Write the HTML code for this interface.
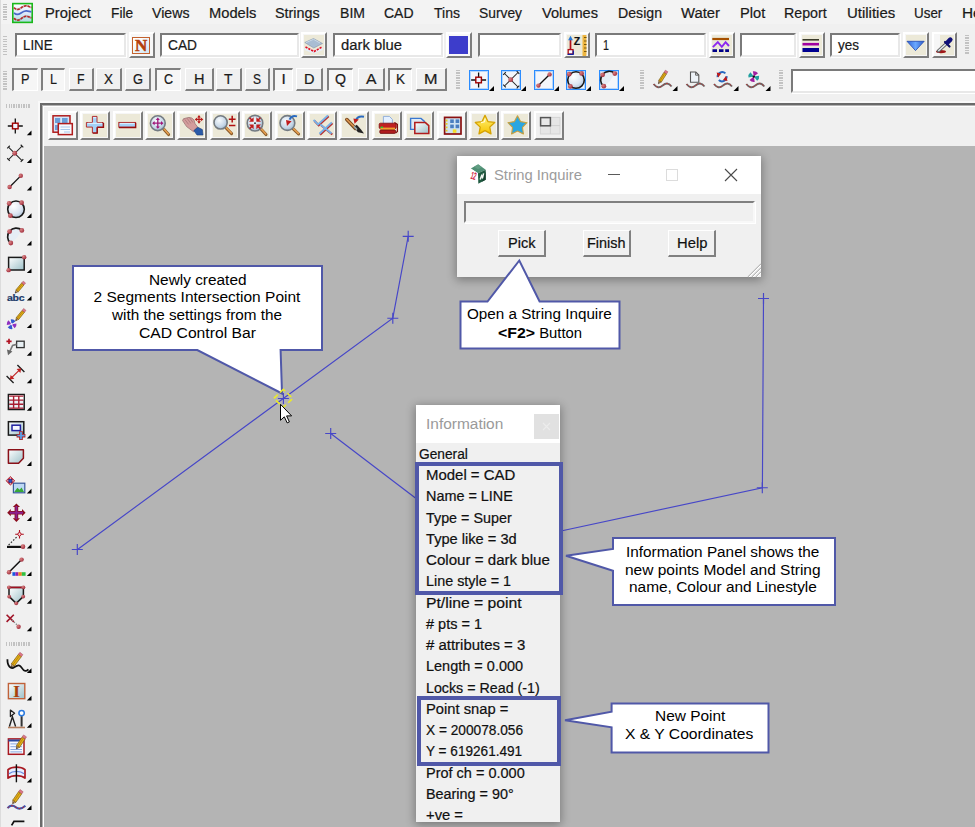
<!DOCTYPE html>
<html lang="en"><head><meta charset="utf-8"><title>12d Model - String Inquire</title>
<style>
html,body{margin:0;padding:0;background:#f0f0f0;}
body{width:975px;height:827px;overflow:hidden;font-family:"Liberation Sans",sans-serif;}
#app{position:relative;width:975px;height:827px;overflow:hidden;background:#f0f0f0;}
#app *{box-sizing:border-box;}
.a{position:absolute;}
.t{position:absolute;white-space:pre;transform-origin:0 0;-webkit-text-stroke:.22px currentColor;}
.c{-webkit-text-stroke:0;}
.inp{position:absolute;background:#fff;border:2px solid;border-color:#7a7a7a #e8e8e8 #e8e8e8 #7a7a7a;box-shadow:1px 1px 0 #fff;}
.btn{position:absolute;background:#ece9d8;border-style:solid;border-width:2px;border-color:#fff #7d7d7d #7d7d7d #fff;box-shadow:inset 1px 1px 0 #f6f6f6,inset -1px -1px 0 #f6f6f6;}
.lb{position:absolute;background:#f0f0f0;border-style:solid;border-width:1px 2px 2px 1px;border-color:#fff #808080 #808080 #fff;}
.lbs{position:absolute;background:#f6f6f6;border-style:solid;border-width:2px 1px 1px 2px;border-color:#808080 #fff #fff #808080;}
.grip{position:absolute;width:4px;background:repeating-linear-gradient(to bottom,#c2c2c2 0,#c2c2c2 1.1px,transparent 1.1px,transparent 2.5px);}
.griph{position:absolute;height:4px;background:repeating-linear-gradient(to right,#c2c2c2 0,#c2c2c2 1.1px,transparent 1.1px,transparent 2.5px);}
.tri{position:absolute;width:0;height:0;border-left:4px solid transparent;border-bottom:4px solid #000;}
svg{position:absolute;overflow:visible;}

</style></head>
<body>
<div id="app">
<div class="a" style="left:0;top:0;width:975px;height:24px;background:#f3f3f3"></div>
<div class="a" style="left:0;top:0;width:1px;height:827px;background:#dcdcdc"></div>
<div class="grip" style="left:3px;top:4px;height:17px"></div>
<span class="t" style="left:45.4px;top:4.9px;font-size:15.5px;line-height:15.5px;color:#1a1a1a;transform:scaleX(0.9513);">Project</span>
<span class="t" style="left:110.5px;top:4.9px;font-size:15.5px;line-height:15.5px;color:#1a1a1a;transform:scaleX(0.8846);">File</span>
<span class="t" style="left:151.5px;top:4.9px;font-size:15.5px;line-height:15.5px;color:#1a1a1a;transform:scaleX(0.9129);">Views</span>
<span class="t" style="left:208.6px;top:4.9px;font-size:15.5px;line-height:15.5px;color:#1a1a1a;transform:scaleX(0.9486);">Models</span>
<span class="t" style="left:275.3px;top:4.9px;font-size:15.5px;line-height:15.5px;color:#1a1a1a;transform:scaleX(0.9264);">Strings</span>
<span class="t" style="left:339.8px;top:4.9px;font-size:15.5px;line-height:15.5px;color:#1a1a1a;transform:scaleX(0.9070);">BIM</span>
<span class="t" style="left:384.0px;top:4.9px;font-size:15.5px;line-height:15.5px;color:#1a1a1a;transform:scaleX(0.9042);">CAD</span>
<span class="t" style="left:434.0px;top:4.9px;font-size:15.5px;line-height:15.5px;color:#1a1a1a;transform:scaleX(0.9053);">Tins</span>
<span class="t" style="left:479.0px;top:4.9px;font-size:15.5px;line-height:15.5px;color:#1a1a1a;transform:scaleX(0.8912);">Survey</span>
<span class="t" style="left:541.5px;top:4.9px;font-size:15.5px;line-height:15.5px;color:#1a1a1a;transform:scaleX(0.9419);">Volumes</span>
<span class="t" style="left:618.0px;top:4.9px;font-size:15.5px;line-height:15.5px;color:#1a1a1a;transform:scaleX(0.9119);">Design</span>
<span class="t" style="left:681.0px;top:4.9px;font-size:15.5px;line-height:15.5px;color:#1a1a1a;transform:scaleX(0.9567);">Water</span>
<span class="t" style="left:739.8px;top:4.9px;font-size:15.5px;line-height:15.5px;color:#1a1a1a;transform:scaleX(0.9432);">Plot</span>
<span class="t" style="left:784.3px;top:4.9px;font-size:15.5px;line-height:15.5px;color:#1a1a1a;transform:scaleX(0.9177);">Report</span>
<span class="t" style="left:846.8px;top:4.9px;font-size:15.5px;line-height:15.5px;color:#1a1a1a;transform:scaleX(0.9649);">Utilities</span>
<span class="t" style="left:914.2px;top:4.9px;font-size:15.5px;line-height:15.5px;color:#1a1a1a;transform:scaleX(0.8645);">User</span>
<span class="t" style="left:961.6px;top:4.9px;font-size:15.5px;line-height:15.5px;color:#1a1a1a;transform:scaleX(0.9878);">Help</span>
<div class="grip" style="left:3px;top:35.5px;height:19px"></div>
<div class="inp" style="left:15px;top:33px;width:111px;height:24px"></div>
<span class="t" style="left:23.0px;top:37.3px;font-size:15.5px;line-height:15.5px;color:#1a1a1a;transform:scaleX(0.8558);">LINE</span>
<div class="btn" style="left:129px;top:32px;width:26px;height:26px"></div>
<div class="inp" style="left:160px;top:33px;width:139px;height:24px"></div>
<span class="t" style="left:168.0px;top:37.3px;font-size:15.5px;line-height:15.5px;color:#1a1a1a;transform:scaleX(0.8859);">CAD</span>
<div class="btn" style="left:301px;top:32px;width:26px;height:26px"></div>
<div class="inp" style="left:333px;top:33px;width:110px;height:24px"></div>
<span class="t" style="left:340.5px;top:37.3px;font-size:15.5px;line-height:15.5px;color:#1a1a1a;transform:scaleX(0.9566);">dark blue</span>
<div class="btn" style="left:446px;top:32px;width:26px;height:26px"></div>
<div class="a" style="left:449px;top:36px;width:19px;height:18px;background:#3d3dcb"></div>
<div class="inp" style="left:478px;top:33px;width:83px;height:24px"></div>
<div class="btn" style="left:564px;top:32px;width:26px;height:26px"></div>
<div class="inp" style="left:595px;top:33px;width:111px;height:24px"></div>
<span class="t" style="left:603.0px;top:37.3px;font-size:15.5px;line-height:15.5px;color:#1a1a1a;transform:scaleX(0.6957);">1</span>
<div class="btn" style="left:709px;top:32px;width:26px;height:26px"></div>
<div class="inp" style="left:740px;top:33px;width:56px;height:24px"></div>
<div class="btn" style="left:799px;top:32px;width:26px;height:26px"></div>
<div class="inp" style="left:830px;top:33px;width:70px;height:24px"></div>
<span class="t" style="left:838.0px;top:37.3px;font-size:15.5px;line-height:15.5px;color:#1a1a1a;transform:scaleX(0.8705);">yes</span>
<div class="btn" style="left:903px;top:32px;width:26px;height:26px"></div>
<div class="btn" style="left:932px;top:32px;width:25px;height:26px"></div>
<div class="grip" style="left:965px;top:35px;height:20px"></div>
<div class="grip" style="left:2.5px;top:70.5px;height:19px"></div>
<div class="lbs" style="left:12px;top:68px;width:26px;height:23px"></div>
<span class="t" style="left:21.2px;top:71.1px;font-size:15.5px;line-height:15.5px;color:#1a1a1a;transform:scaleX(0.8218);">P</span>
<div class="lbs" style="left:41px;top:68px;width:24px;height:23px"></div>
<span class="t" style="left:50.0px;top:71.1px;font-size:15.5px;line-height:15.5px;color:#1a1a1a;transform:scaleX(0.8116);">L</span>
<div class="lb" style="left:69px;top:68px;width:25px;height:23px"></div>
<span class="t" style="left:77.2px;top:71.1px;font-size:15.5px;line-height:15.5px;color:#1a1a1a;transform:scaleX(0.7921);">F</span>
<div class="lb" style="left:96px;top:68px;width:26px;height:23px"></div>
<span class="t" style="left:104.0px;top:71.1px;font-size:15.5px;line-height:15.5px;color:#1a1a1a;transform:scaleX(0.8701);">X</span>
<div class="lb" style="left:125px;top:68px;width:26px;height:23px"></div>
<span class="t" style="left:132.5px;top:71.1px;font-size:15.5px;line-height:15.5px;color:#1a1a1a;transform:scaleX(0.8290);">G</span>
<div class="lbs" style="left:155px;top:68px;width:26px;height:23px"></div>
<span class="t" style="left:164.0px;top:71.1px;font-size:15.5px;line-height:15.5px;color:#1a1a1a;transform:scaleX(0.8033);">C</span>
<div class="lb" style="left:185px;top:68px;width:29px;height:23px"></div>
<span class="t" style="left:193.8px;top:71.1px;font-size:15.5px;line-height:15.5px;color:#1a1a1a;transform:scaleX(0.9372);">H</span>
<div class="lb" style="left:216px;top:68px;width:26px;height:23px"></div>
<span class="t" style="left:224.2px;top:71.1px;font-size:15.5px;line-height:15.5px;color:#1a1a1a;transform:scaleX(0.8977);">T</span>
<div class="lb" style="left:245px;top:68px;width:25px;height:23px"></div>
<span class="t" style="left:253.0px;top:71.1px;font-size:15.5px;line-height:15.5px;color:#1a1a1a;transform:scaleX(0.7734);">S</span>
<div class="lbs" style="left:273px;top:68px;width:20px;height:23px"></div>
<span class="t" style="left:281.4px;top:71.1px;font-size:15.5px;line-height:15.5px;color:#1a1a1a;">I</span>
<div class="lb" style="left:296px;top:68px;width:27px;height:23px"></div>
<span class="t" style="left:303.8px;top:71.1px;font-size:15.5px;line-height:15.5px;color:#1a1a1a;transform:scaleX(0.9372);">D</span>
<div class="lbs" style="left:327px;top:68px;width:26px;height:23px"></div>
<span class="t" style="left:335.0px;top:71.1px;font-size:15.5px;line-height:15.5px;color:#1a1a1a;transform:scaleX(0.9119);">Q</span>
<div class="lb" style="left:358px;top:68px;width:27px;height:23px"></div>
<span class="t" style="left:365.8px;top:71.1px;font-size:15.5px;line-height:15.5px;color:#1a1a1a;transform:scaleX(1.0151);">A</span>
<div class="lbs" style="left:388px;top:68px;width:24px;height:23px"></div>
<span class="t" style="left:396.0px;top:71.1px;font-size:15.5px;line-height:15.5px;color:#1a1a1a;transform:scaleX(0.8701);">K</span>
<div class="lb" style="left:416px;top:68px;width:31px;height:23px"></div>
<span class="t" style="left:424.2px;top:71.1px;font-size:15.5px;line-height:15.5px;color:#1a1a1a;transform:scaleX(1.0447);">M</span>
<div class="grip" style="left:456px;top:70px;height:20px"></div>
<div class="grip" style="left:640px;top:70px;height:20px"></div>
<div class="grip" style="left:779px;top:70px;height:20px"></div>
<div class="inp" style="left:791px;top:69px;width:190px;height:24px"></div>
<svg style="left:0;top:0" width="0" height="0"><defs><linearGradient id="gApp" x1="0" y1="0" x2="0" y2="1"><stop offset="0" stop-color="#ffffff"/><stop offset=".5" stop-color="#dfe9fb"/><stop offset="1" stop-color="#a8dcdc"/></linearGradient><radialGradient id="gBall" cx=".35" cy=".3" r=".8"><stop offset="0" stop-color="#ffffff"/><stop offset=".6" stop-color="#dde6f2"/><stop offset="1" stop-color="#a9bfd6"/></radialGradient><radialGradient id="gDot" cx=".35" cy=".35" r=".7"><stop offset="0" stop-color="#d88484"/><stop offset="1" stop-color="#a02a3a"/></radialGradient><linearGradient id="gRect" x1="0" y1="0" x2="1" y2="1"><stop offset="0" stop-color="#ffffff"/><stop offset="1" stop-color="#9cc0c8"/></linearGradient><linearGradient id="gTri" x1="0" y1="0" x2="1" y2="0"><stop offset="0" stop-color="#2f62d8"/><stop offset=".5" stop-color="#6aa8ff"/><stop offset="1" stop-color="#2a58c8"/></linearGradient><radialGradient id="gLens" cx=".4" cy=".35" r=".75"><stop offset="0" stop-color="#f6fafd"/><stop offset=".6" stop-color="#c8d8e8"/><stop offset="1" stop-color="#98b4cc"/></radialGradient><linearGradient id="gStarY" x1="0" y1="0" x2="0" y2="1"><stop offset="0" stop-color="#fff27a"/><stop offset="1" stop-color="#f6c400"/></linearGradient></defs></svg>
<svg style="left:12px;top:3px" width="21" height="20" viewBox="12 3 21 20" ><rect x="12.8" y="3.6" width="19.4" height="18.8" fill="url(#gApp)" stroke="#1ab81a" stroke-width="1.6"/><path d="M14 7.6C15.6 9.6 18.2 10 20.4 8.4S24.6 5.4 26.6 5.8S29.6 7 31.4 7.4" fill="none" stroke="#7a3030" stroke-width="2" opacity=".35"/><path d="M14 7.6C15.6 9.6 18.2 10 20.4 8.4S24.6 5.4 26.6 5.8S29.6 7 31.4 7.4" fill="none" stroke="#b82424" stroke-width="1.5" stroke-dasharray="2.6 1.1"/><path d="M14 12.8C15.8 14.6 18.4 14.8 20.6 13.2S24.4 10.6 26.4 10.8S29.6 11.6 31.4 11.8" fill="none" stroke="#4a68c8" stroke-width="1.7"/><path d="M14 18.2C15.8 20.4 18.6 20.8 20.8 19S24.6 15.8 26.6 16.2S29.6 17.4 31.4 17.8" fill="none" stroke="#7a3030" stroke-width="2" opacity=".35"/><path d="M14 18.2C15.8 20.4 18.6 20.8 20.8 19S24.6 15.8 26.6 16.2S29.6 17.4 31.4 17.8" fill="none" stroke="#b82424" stroke-width="1.5" stroke-dasharray="2.6 1.1"/></svg>
<div class="a" style="left:131px;top:34px;width:22px;height:22px;background:#f7f7f7"></div>
<div class="a" style="left:132px;top:37px;width:18px;height:17px;border:1px solid #c4622e;background:linear-gradient(135deg,#fff 20%,#cfe6f4 100%)"></div>
<span class="t" style="left:134.8px;top:37.7px;font-family:'Liberation Serif',serif;font-weight:700;font-size:16px;line-height:16px;color:#b5400c;-webkit-text-stroke:.5px #b5400c;transform:scaleX(1.06)">N</span>
<svg style="left:303px;top:35px" width="22" height="20" viewBox="303 35 22 20" ><path d="M305 48.5L314 52L322.5 48.5" fill="none" stroke="#e6eef8" stroke-width="3"/><path d="M305.5 47L314 51.5L322 47" fill="none" stroke="#e01020" stroke-width="1.6" stroke-dasharray="2.2 1"/><path d="M304.8 42.5L313.5 38.5L322.5 43.5L313.8 48Z" fill="#a9bdd3" stroke="#8194aa" stroke-width=".6"/><path d="M306 42.6L313.5 39.3L320 43" fill="none" stroke="#c9d8e8" stroke-width="1"/></svg>
<div class="a" style="left:448px;top:34px;width:22px;height:22px;background:#f8f8f8"></div><div class="a" style="left:449px;top:36px;width:19px;height:18px;background:#3d3dcb"></div>
<svg style="left:566px;top:34px" width="22" height="23" viewBox="566 34 22 23" ><rect x="582.5" y="35" width="3.8" height="21" fill="#eeb640"/><path d="M584 37.5h2.6M584 41h2.6M584 44.5h2.6M584 48h2.6M584 51.5h2.6" stroke="#7a5a10" stroke-width="1"/><path d="M570.5 39V50" stroke="#b01018" stroke-width="1.7"/><path d="M570.5 35.8L572.9 40.2H568.1Z" fill="#2878d8"/><rect x="568.2" y="49.6" width="4.8" height="4.4" fill="#f4f8ff" stroke="#b01018" stroke-width="1.3"/><path d="M567.6 54.3H573.6M573.3 54.3V50.5" stroke="#1020a0" stroke-width="1.3" fill="none"/></svg>
<span class="t" style="left:573.8px;top:35.6px;font-weight:700;font-size:10.5px;line-height:10px;color:#111">Z</span>
<svg style="left:711px;top:35px" width="21" height="20" viewBox="711 35 21 20" ><path d="M712.3 39H729" stroke="#a65000" stroke-width="2.2"/><path d="M712.8 47.2L717.8 42.2L721.8 46.8L725.6 42.2L729 46" fill="none" stroke="#8c28f0" stroke-width="1.9"/><path d="M712.5 50.6H717M719 50.6H723.5M725.2 50.6H729" stroke="#000088" stroke-width="2.6"/></svg>
<svg style="left:801px;top:35px" width="21" height="20" viewBox="801 35 21 20" ><path d="M802.5 39.8H819" stroke="#3a3a2a" stroke-width="1.6"/><path d="M802.5 44.2H819" stroke="#a000a0" stroke-width="2.6"/><path d="M802.5 50H819" stroke="#000090" stroke-width="4"/></svg>
<svg style="left:905px;top:38px" width="22" height="15" viewBox="905 38 22 15" ><path d="M907 41.3H924.2L915.5 50.6Z" fill="url(#gTri)" stroke="#2048b0" stroke-width=".8"/></svg>
<div class="a" style="left:934px;top:34px;width:6px;height:22px;background:#f6f6f6"></div>
<svg style="left:934px;top:35px" width="22" height="21" viewBox="934 35 22 21" ><ellipse cx="941" cy="51.6" rx="5" ry="1.7" fill="#a01818"/><path d="M946.5 43.5L938.3 51" stroke="#666" stroke-width="3.2" stroke-linecap="round"/><path d="M946 44L938.8 50.5" stroke="#e8eef4" stroke-width="1.4" stroke-linecap="round"/><path d="M945 42L949.5 46.5" stroke="#101060" stroke-width="2.2" stroke-linecap="round"/><path d="M947.5 42.5L950.3 39.6" stroke="#101078" stroke-width="4.6" stroke-linecap="round"/></svg>
<div class="a" style="left:469px;top:70px;width:20px;height:20px;border:1px solid #2a8cff;box-shadow:inset 0 0 0 1px rgba(42,140,255,.3);background:#f3f6fa"></div>
<svg style="left:467px;top:66px" width="30" height="28" viewBox="467 66 30 28" ><path d="M471.1 80H486.1M478.6 72.5V87.5" stroke="#111" stroke-width="1.3"/><rect x="475.8" y="77.2" width="5.6" height="5.6" fill="#eef4ff" stroke="#a00000" stroke-width="1.4"/><path d="M494 91H489L494 86Z" fill="#000"/></svg>
<div class="a" style="left:501px;top:70px;width:20px;height:20px;border:1px solid #2a8cff;box-shadow:inset 0 0 0 1px rgba(42,140,255,.3);background:#f3f6fa"></div>
<svg style="left:499px;top:66px" width="30" height="28" viewBox="499 66 30 28" ><path d="M504.5 73.5L518 87M518 72.5L504.5 86" stroke="#2a2a2a" stroke-width="1.05"/><path d="M503.2 74.8l2.6 -2.6M516.7 88.3l2.6 -2.6M516.7 71.2l2.6 2.6M503.2 84.7l2.6 2.6" stroke="#222" stroke-width="1.1"/><circle cx="510.7" cy="79.7" r="2.4" fill="url(#gDot)"/><path d="M526 91H521L526 86Z" fill="#000"/></svg>
<div class="a" style="left:534px;top:70px;width:20px;height:20px;border:1px solid #2a8cff;box-shadow:inset 0 0 0 1px rgba(42,140,255,.3);background:#f3f6fa"></div>
<svg style="left:532px;top:66px" width="30" height="28" viewBox="532 66 30 28" ><path d="M538.7 85.3L549.3 74.7" stroke="#111" stroke-width="1.3"/><circle cx="538.4" cy="85.6" r="2.2" fill="url(#gDot)"/><circle cx="549.6" cy="74.4" r="2.2" fill="url(#gDot)"/><path d="M559 91H554L559 86Z" fill="#000"/></svg>
<div class="a" style="left:566px;top:70px;width:20px;height:20px;border:1px solid #2a8cff;box-shadow:inset 0 0 0 1px rgba(42,140,255,.3);background:#f3f6fa"></div>
<svg style="left:564px;top:66px" width="30" height="28" viewBox="564 66 30 28" ><circle cx="576" cy="80" r="8.3" fill="url(#gBall)" stroke="#1a1a1a" stroke-width="1.6"/><circle cx="569.2" cy="74.2" r="2.4" fill="url(#gDot)"/><circle cx="581.6" cy="73.4" r="2.4" fill="url(#gDot)"/><circle cx="570.4" cy="86.4" r="2.4" fill="url(#gDot)"/><path d="M591 91H586L591 86Z" fill="#000"/></svg>
<div class="a" style="left:599px;top:70px;width:20px;height:20px;border:1px solid #2a8cff;box-shadow:inset 0 0 0 1px rgba(42,140,255,.3);background:#f3f6fa"></div>
<svg style="left:597px;top:66px" width="30" height="28" viewBox="597 66 30 28" ><path d="M614.8 73.4A8.5 8.5 0 0 0 603.6 86.4L610 81Z" fill="#e6edf5"/><path d="M614.8 73.4A8.5 8.5 0 0 0 603.6 86.4" fill="none" stroke="#1a1a1a" stroke-width="1.6"/><circle cx="602.6" cy="74.8" r="2.4" fill="url(#gDot)"/><circle cx="614.8" cy="73.6" r="2.4" fill="url(#gDot)"/><circle cx="603.8" cy="86.2" r="2.4" fill="url(#gDot)"/><path d="M624 91H619L624 86Z" fill="#000"/></svg>
<svg style="left:650px;top:66px" width="30" height="28" viewBox="650 66 30 28" ><path d="M653.6 84.0C656.6 88.0 659.6 88.0 662.6 85.5S668.6 82.5 671.6 86.5" fill="none" stroke="#6a6a6a" stroke-width="1.9"/><path d="M653.6 84.0C656.6 88.0 659.6 88.0 662.6 85.5S668.6 82.5 671.6 86.5" fill="none" stroke="#c03030" stroke-width=".9" stroke-dasharray="2 1.6"/><path d="M658.40 83.80L661.28 82.08L658.76 80.46Z" fill="#c8a070" stroke="#5a4020" stroke-width=".5"/><path d="M661.28 82.08L666.57 73.83L664.04 72.21L658.76 80.46Z" fill="#e4b018" stroke="#7a5a10" stroke-width=".7"/><path d="M659.85 81.17L665.14 72.91" stroke="#b88408" stroke-width=".9"/><path d="M666.57 73.83L667.86 71.81L665.34 70.19L664.04 72.21Z" fill="#de7888" stroke="#a04858" stroke-width=".5"/><path d="M658.40 83.80L659.71 82.86L658.70 82.21Z" fill="#1a1a1a"/><path d="M677.5 91H672.5L677.5 86Z" fill="#000"/></svg>
<svg style="left:684px;top:66px" width="24" height="28" viewBox="684 66 24 28" ><path d="M686.5 84.0C689.5 88.0 692.5 88.0 695.5 85.5S701.5 82.5 704.5 86.5" fill="none" stroke="#6a6a6a" stroke-width="1.9"/><path d="M686.5 84.0C689.5 88.0 692.5 88.0 695.5 85.5S701.5 82.5 704.5 86.5" fill="none" stroke="#c03030" stroke-width=".9" stroke-dasharray="2 1.6"/><path d="M690.5 72H695.8L698.8 75V82.2H690.5Z" fill="#eef3f8" stroke="#555" stroke-width="1.1"/><path d="M695.6 72.2V75.2H698.6" fill="none" stroke="#555" stroke-width=".9"/></svg>
<svg style="left:712px;top:66px" width="30" height="28" viewBox="712 66 30 28" ><path d="M714 84.0C717 88.0 720 88.0 723 85.5S729 82.5 732 86.5" fill="none" stroke="#6a6a6a" stroke-width="1.9"/><path d="M714 84.0C717 88.0 720 88.0 723 85.5S729 82.5 732 86.5" fill="none" stroke="#c03030" stroke-width=".9" stroke-dasharray="2 1.6"/><path d="M717.6 77.2A4.6 4.6 0 0 1 725.4 73.4" fill="none" stroke="#2868c0" stroke-width="1.9"/><path d="M726.6 76.2A4.6 4.6 0 0 1 718.8 80" fill="none" stroke="#2868c0" stroke-width="1.9"/><path d="M716.6 72.4L721.2 73.4L718.2 77.4Z" fill="#c01818"/><path d="M727.6 81L723 80L726 76Z" fill="#c01818"/><path d="M738.5 91H733.5L738.5 86Z" fill="#000"/></svg>
<svg style="left:744px;top:66px" width="30" height="28" viewBox="744 66 30 28" ><path d="M746.3 84.0C749.3 88.0 752.3 88.0 755.3 85.5S761.3 82.5 764.3 86.5" fill="none" stroke="#6a6a6a" stroke-width="1.9"/><path d="M746.3 84.0C749.3 88.0 752.3 88.0 755.3 85.5S761.3 82.5 764.3 86.5" fill="none" stroke="#c03030" stroke-width=".9" stroke-dasharray="2 1.6"/><path d="M753.8 76.6L752.86 71.28A5.4 5.4 0 0 1 758.06 73.28Z" fill="#a020a0"/><path d="M753.8 76.6L759.12 75.66A5.4 5.4 0 0 1 757.12 80.86Z" fill="#20a0a0"/><path d="M753.8 76.6L754.74 81.92A5.4 5.4 0 0 1 749.54 79.92Z" fill="#a020a0"/><path d="M753.8 76.6L748.48 77.54A5.4 5.4 0 0 1 750.48 72.34Z" fill="#20a0a0"/><circle cx="753.8" cy="76.6" r="1.2" fill="#111"/><path d="M770.5 91H765.5L770.5 86Z" fill="#000"/></svg>
<div class="a" style="left:38px;top:101px;width:940px;height:730px;border-left:2px solid #f9f9f9;border-top:2px solid #f9f9f9"></div>
<div class="a" style="left:40px;top:103px;width:940px;height:730px;border:2px solid #6a6a6a;border-right:0;border-bottom:0;background:#f0f0f0"></div>
<div class="a" style="left:42px;top:105px;width:940px;height:730px;border-left:1px solid #b2b2b2;border-top:1px solid #b2b2b2;"></div>
<div class="a" style="left:43px;top:106px;width:940px;height:730px;border-left:1px solid #fff;border-top:1px solid #fff;"></div>
<div class="a" style="left:44px;top:146px;width:940px;height:700px;background:#b4b4b4"></div>
<div class="btn" style="left:48px;top:111px;width:30px;height:29px"></div>
<div class="btn" style="left:80px;top:111px;width:30px;height:29px"></div>
<div class="btn" style="left:113px;top:111px;width:30px;height:29px"></div>
<div class="btn" style="left:145px;top:111px;width:30px;height:29px"></div>
<div class="btn" style="left:177px;top:111px;width:30px;height:29px"></div>
<div class="btn" style="left:210px;top:111px;width:30px;height:29px"></div>
<div class="btn" style="left:242px;top:111px;width:30px;height:29px"></div>
<div class="btn" style="left:275px;top:111px;width:30px;height:29px"></div>
<div class="btn" style="left:307px;top:111px;width:30px;height:29px"></div>
<div class="btn" style="left:339px;top:111px;width:30px;height:29px"></div>
<div class="btn" style="left:372px;top:111px;width:30px;height:29px"></div>
<div class="btn" style="left:404px;top:111px;width:30px;height:29px"></div>
<div class="btn" style="left:437px;top:111px;width:30px;height:29px"></div>
<div class="btn" style="left:469px;top:111px;width:30px;height:29px"></div>
<div class="btn" style="left:501px;top:111px;width:30px;height:29px"></div>
<div class="btn" style="left:534px;top:111px;width:30px;height:29px"></div>
<div class="a" style="left:50px;top:113px;width:26px;height:25px;background:#f5f5f5"></div>
<div class="a" style="left:439px;top:113px;width:26px;height:25px;background:#f5f5f5"></div>
<div class="a" style="left:536px;top:113px;width:26px;height:25px;background:#f0f0f0"></div>
<svg style="left:44px;top:108px" width="530" height="34" viewBox="44 108 530 34" ><rect x="53" y="115.8" width="17" height="16.4" fill="#d4e6f8" stroke="#b01c1c" stroke-width="1.5"/><rect x="55" y="118" width="5.2" height="5" fill="#6a9ed8"/><rect x="62" y="118" width="5.6" height="5" fill="#6a9ed8"/><rect x="55" y="125" width="3" height="5" fill="#6a9ed8"/><rect x="58.3" y="123.6" width="14" height="11" fill="#f6faff" stroke="#b01c1c" stroke-width="1.5"/><path d="M60.5 127H70M60.5 129.5H70M64 132H70" stroke="#a8c8ec" stroke-width="1"/><path d="M92.4 116.4H97V122.5H103.2V127.1H97V132.9H92.4V127.1H86.4V122.5H92.4Z" fill="#a4d2f8" stroke="#b01c1c" stroke-width=".9"/><path d="M97.3 127.4V133.2H92.8M103.5 123V127.4H97.3" fill="none" stroke="#981010" stroke-width="1.3"/><path d="M93.2 117.6H96.2M87.6 123.4H102" stroke="#d8eeff" stroke-width="1.2"/><rect x="118.8" y="122.4" width="16.6" height="4.8" fill="#a4d2f8" stroke="#b01c1c" stroke-width=".9"/><path d="M119 127.5H135.7V122.8" fill="none" stroke="#981010" stroke-width="1.3"/><path d="M120 123.5H134.4" stroke="#d8eeff" stroke-width="1.1"/><path d="M163.63338048090523 129.03338048090524L168.6 134.6" stroke="#8a5a28" stroke-width="3" stroke-linecap="round"/><path d="M163.83338048090525 128.83338048090525L168.4 134.0" stroke="#e8a050" stroke-width="1.5" stroke-linecap="round"/><circle cx="157.8" cy="123.2" r="7.4" fill="url(#gLens)" stroke="#747b82" stroke-width="1.6"/><path d="M153.4 123.2H162.20000000000002M157.8 118.8V127.60000000000001" stroke="#a0187a" stroke-width="1.3"/><path d="M163.4 123.2L161.0 125.3L161.0 121.10000000000001Z" fill="#a0187a"/><path d="M152.20000000000002 123.2L154.60000000000002 121.10000000000001L154.60000000000002 125.3Z" fill="#a0187a"/><path d="M157.8 128.8L155.70000000000002 126.4L159.9 126.4Z" fill="#a0187a"/><path d="M157.8 117.60000000000001L159.9 120.0L155.70000000000002 120.0Z" fill="#a0187a"/><path d="M182.6 120.6L186.6 126.6L193.6 131.8L197.6 127L195 123.6L194 120L191.8 118L189 117.4L186.2 118L183.4 118.8Z" fill="#d49c9c" stroke="#946c6c" stroke-width=".7"/><path d="M184.8 119.4L188.6 124.4M187 118.2L190.8 123.4M189.6 117.8L193 122.6" stroke="#a87878" stroke-width=".8"/><path d="M193.8 130.6L197.8 127.2L202.4 129.6L203 135H197Z" fill="#2a5aa8" stroke="#1c3c78" stroke-width=".6"/><path d="M195.9 119.4H202.1M199 116.30000000000001V122.5" stroke="#b81818" stroke-width="1.2"/><path d="M203.3 119.4L200.9 121.2L200.9 117.60000000000001Z" fill="#b81818"/><path d="M194.7 119.4L197.1 117.60000000000001L197.1 121.2Z" fill="#b81818"/><path d="M199.0 123.7L197.2 121.30000000000001L200.8 121.30000000000001Z" fill="#b81818"/><path d="M199.0 115.10000000000001L200.8 117.5L197.2 117.5Z" fill="#b81818"/><path d="M225.86760961810467 127.66760961810466L231.6 133.6" stroke="#8a5a28" stroke-width="3" stroke-linecap="round"/><path d="M226.06760961810468 127.46760961810467L231.4 133.0" stroke="#e8a050" stroke-width="1.5" stroke-linecap="round"/><circle cx="220.6" cy="122.4" r="6.6" fill="url(#gLens)" stroke="#747b82" stroke-width="1.6"/><path d="M228.8 119.2H235.6M232.2 115.8V122.6M229 125.6H235.4" stroke="#b01010" stroke-width="1.5"/><path d="M261.11626591230555 129.3162659123055L266 134.6" stroke="#8a5a28" stroke-width="3" stroke-linecap="round"/><path d="M261.31626591230554 129.11626591230552L265.8 134.0" stroke="#e8a050" stroke-width="1.5" stroke-linecap="round"/><circle cx="255" cy="123.2" r="7.8" fill="url(#gLens)" stroke="#747b82" stroke-width="1.6"/><path d="M253.6 121.8L249.0 121.8L253.6 117.2Z" fill="#c01c1c"/><path d="M252.1 120.3L249.6 117.8" stroke="#c01c1c" stroke-width="1.6"/><path d="M253.6 124.60000000000001L249.0 124.60000000000001L253.6 129.20000000000002Z" fill="#c01c1c"/><path d="M252.1 126.10000000000001L249.6 128.6" stroke="#c01c1c" stroke-width="1.6"/><path d="M256.4 121.8L261.0 121.8L256.4 117.2Z" fill="#c01c1c"/><path d="M257.9 120.3L260.4 117.8" stroke="#c01c1c" stroke-width="1.6"/><path d="M256.4 124.60000000000001L261.0 124.60000000000001L256.4 129.20000000000002Z" fill="#c01c1c"/><path d="M257.9 126.10000000000001L260.4 128.6" stroke="#c01c1c" stroke-width="1.6"/><circle cx="255" cy="123.2" r=".9" fill="#222"/><path d="M293.2333804809052 128.83338048090522L298.6 134" stroke="#8a5a28" stroke-width="3" stroke-linecap="round"/><path d="M293.4333804809052 128.63338048090523L298.40000000000003 133.4" stroke="#e8a050" stroke-width="1.5" stroke-linecap="round"/><circle cx="287.4" cy="123" r="7.4" fill="url(#gLens)" stroke="#747b82" stroke-width="1.6"/><path d="M286 120L291.6 121.2L287 126Z" fill="#c01c1c"/><path d="M289.6 119.6C291 116.6 294 115.6 297 116.4" fill="none" stroke="#2a6ac0" stroke-width="1.9"/><path d="M313.6 119.8L318 124.4L328 115.4" fill="none" stroke="#b83030" stroke-width="2" transform="translate(.7 .9)"/><path d="M313.6 119.8L318 124.4L328 115.4" fill="none" stroke="#78b2e8" stroke-width="1.9"/><path d="M320.4 124.4L331.6 133.6M331.8 122.4L319.4 133.8" fill="none" stroke="#b83030" stroke-width="2" transform="translate(.7 .9)"/><path d="M320.4 124.4L331.6 133.6M331.8 122.4L319.4 133.8" fill="none" stroke="#78b2e8" stroke-width="1.9"/><path d="M346.8 119.6L355.4 128.4" stroke="#7a4a20" stroke-width="3.6" stroke-linecap="round"/><path d="M346.8 119.4L355 127.8" stroke="#e09850" stroke-width="1.5" stroke-linecap="round"/><path d="M353.6 127L356.8 124.8L361 129.6L364 133.6L358 132.2Z" fill="#222"/><path d="M354 126.4L357 129.6" stroke="#9aa" stroke-width="1.6"/><path d="M355.6 121.2C356.6 117.6 360 116 364 116.8" fill="none" stroke="#2a6ac0" stroke-width="2"/><path d="M353.4 118.4L358.8 119.4L354.6 123.8Z" fill="#c01c1c"/><path d="M383.4 124V116.4H389.4L392.4 119.4V124Z" fill="#e4f0ff" stroke="#88a8d8" stroke-width=".9"/><rect x="379.2" y="123.2" width="17" height="5.4" rx="1.2" fill="#c02020" stroke="#801010" stroke-width=".8"/><rect x="380.4" y="127.6" width="14.6" height="2.6" fill="#f0a030"/><rect x="380.6" y="126.6" width="2.4" height="1.4" fill="#30d030"/><rect x="379.8" y="130" width="15.8" height="3.4" rx="1" fill="#b01c1c" stroke="#701010" stroke-width=".8"/><path d="M394.4 122.4L397.4 124.4V131.4L395.6 133" fill="none" stroke="#801010" stroke-width="1.2"/><path d="M410.6 118.4H421L424.4 121.4V129.4H410.6Z" fill="#dfeaf4" stroke="#3a78d0" stroke-width="1.4"/><path d="M414.8 122.6H425.4L428.8 125.6V133.4H414.8Z" fill="url(#gRect)" stroke="#b01c1c" stroke-width="1.5"/><rect x="444.6" y="117.4" width="16.4" height="16.6" fill="#cfe2f2" stroke="#8a1010" stroke-width="1.7"/><rect x="450.2" y="119.4" width="3.6" height="3.6" fill="#4a7ec0"/><rect x="455.6" y="119.4" width="3.6" height="3.6" fill="#4a7ec0"/><rect x="450.2" y="124.6" width="3.6" height="3.6" fill="#4a7ec0"/><rect x="455.6" y="124.6" width="3.6" height="3.6" fill="#4a7ec0"/><rect x="452.8" y="129.4" width="3.6" height="3.4" fill="#f4dc28"/><path d="M446.6 119.6V133" stroke="#e8cc20" stroke-width="1.8" stroke-dasharray="1.8 1.6"/><path d="M485.00 115.40L487.94 121.55L494.70 122.45L489.76 127.15L491.00 133.85L485.00 130.60L479.00 133.85L480.24 127.15L475.30 122.45L482.06 121.55Z" fill="url(#gStarY)" stroke="#d6a200" stroke-width="1.3" stroke-linejoin="round"/><path d="M481 122.6L484.4 121.8L485.2 118.6" fill="none" stroke="#fffbd0" stroke-width="1.2"/><path d="M517.50 115.80L520.56 121.59L527.01 122.71L522.45 127.41L523.38 133.89L517.50 131.00L511.62 133.89L512.55 127.41L507.99 122.71L514.44 121.59Z" fill="#28a6e2" stroke="#c8a040" stroke-width="1.1" stroke-linejoin="round"/><rect x="540.4" y="117.4" width="19.6" height="16.6" fill="#e6e6e6" stroke="#d4d4d4" stroke-width="1"/><path d="M550.4 117.4V134M540.4 125.6H560" stroke="#d0d0d0" stroke-width="1"/><rect x="540.6" y="117.6" width="9.8" height="8.2" fill="#e8e8e8" stroke="#555" stroke-width="1.5"/></svg>
<div class="griph" style="left:6px;top:104.4px;width:24.5px"></div>
<div class="griph" style="left:6px;top:641.6px;width:24.5px"></div>
<span class="t" style="left:7.4px;top:292.9px;font-size:9.5px;line-height:10px;font-weight:700;color:#1c3a6a;letter-spacing:-.2px;transform:scaleX(1.1)">abc</span>
<svg style="left:0px;top:110px" width="40" height="717" viewBox="0 110 40 717" ><path d="M31.5 135.3H26.8L31.5 130.6Z" fill="#000"/><path d="M31.5 162.9H26.8L31.5 158.2Z" fill="#000"/><path d="M31.5 190.4H26.8L31.5 185.7Z" fill="#000"/><path d="M31.5 218.0H26.8L31.5 213.3Z" fill="#000"/><path d="M31.5 245.5H26.8L31.5 240.8Z" fill="#000"/><path d="M31.5 273.1H26.8L31.5 268.4Z" fill="#000"/><path d="M31.5 300.6H26.8L31.5 295.9Z" fill="#000"/><path d="M31.5 328.1H26.8L31.5 323.4Z" fill="#000"/><path d="M31.5 355.7H26.8L31.5 351.0Z" fill="#000"/><path d="M31.5 383.2H26.8L31.5 378.6Z" fill="#000"/><path d="M31.5 410.8H26.8L31.5 406.1Z" fill="#000"/><path d="M31.5 438.4H26.8L31.5 433.7Z" fill="#000"/><path d="M31.5 465.9H26.8L31.5 461.2Z" fill="#000"/><path d="M31.5 493.5H26.8L31.5 488.8Z" fill="#000"/><path d="M31.5 521.0H26.8L31.5 516.3Z" fill="#000"/><path d="M31.5 548.5H26.8L31.5 543.8Z" fill="#000"/><path d="M31.5 576.1H26.8L31.5 571.4Z" fill="#000"/><path d="M31.5 603.7H26.8L31.5 599.0Z" fill="#000"/><path d="M31.5 631.2H26.8L31.5 626.5Z" fill="#000"/><path d="M31.5 673.0H26.8L31.5 668.3Z" fill="#000"/><path d="M31.5 700.4H26.8L31.5 695.7Z" fill="#000"/><path d="M31.5 727.8H26.8L31.5 723.1Z" fill="#000"/><path d="M31.5 755.2H26.8L31.5 750.5Z" fill="#000"/><path d="M31.5 782.6H26.8L31.5 777.9Z" fill="#000"/><path d="M31.5 810.0H26.8L31.5 805.3Z" fill="#000"/><path d="M7.800000000000001 126.00000000000001H22.8M15.3 118.50000000000001V133.5" stroke="#111" stroke-width="1.3"/><rect x="12.5" y="123.20000000000002" width="5.6" height="5.6" fill="#eef4ff" stroke="#a00000" stroke-width="1.4"/><path d="M8.5 147.05L22 160.55M22 146.05L8.5 159.55" stroke="#2a2a2a" stroke-width="1.05"/><path d="M7.2 148.35000000000002l2.6 -2.6M20.7 161.85000000000002l2.6 -2.6M20.7 144.75l2.6 2.6M7.2 158.25l2.6 2.6" stroke="#222" stroke-width="1.1"/><circle cx="14.7" cy="153.25" r="2.4" fill="url(#gDot)"/><path d="M9.899999999999999 186.70000000000002L20.5 176.1" stroke="#111" stroke-width="1.3"/><circle cx="9.6" cy="187.0" r="2.2" fill="url(#gDot)"/><circle cx="20.799999999999997" cy="175.8" r="2.2" fill="url(#gDot)"/><circle cx="16" cy="209.25" r="8.3" fill="url(#gBall)" stroke="#1a1a1a" stroke-width="1.6"/><circle cx="9.2" cy="203.45" r="2.4" fill="url(#gDot)"/><circle cx="21.6" cy="202.65" r="2.4" fill="url(#gDot)"/><circle cx="10.4" cy="215.65" r="2.4" fill="url(#gDot)"/><path d="M21.8 230.2A8.5 8.5 0 0 0 10.6 243.2L17 237.79999999999998Z" fill="#e6edf5"/><path d="M21.8 230.2A8.5 8.5 0 0 0 10.6 243.2" fill="none" stroke="#1a1a1a" stroke-width="1.6"/><circle cx="9.6" cy="231.6" r="2.4" fill="url(#gDot)"/><circle cx="21.8" cy="230.39999999999998" r="2.4" fill="url(#gDot)"/><circle cx="10.8" cy="242.99999999999997" r="2.4" fill="url(#gDot)"/><rect x="8.6" y="257.4" width="15.6" height="12.6" fill="url(#gRect)" stroke="#1a1a1a" stroke-width="1.5"/><circle cx="24.2" cy="257.15" r="2.2" fill="url(#gDot)"/><circle cx="8.6" cy="270.15" r="2.2" fill="url(#gDot)"/><path d="M15.20 293.10L18.28 291.76L15.97 289.84Z" fill="#c8a070" stroke="#5a4020" stroke-width=".5"/><path d="M18.28 291.76L24.01 284.90L21.71 282.98L15.97 289.84Z" fill="#e4b018" stroke="#7a5a10" stroke-width=".7"/><path d="M16.97 290.67L22.71 283.81" stroke="#b88408" stroke-width=".9"/><path d="M24.01 284.90L25.55 283.06L23.25 281.14L21.71 282.98Z" fill="#de7888" stroke="#a04858" stroke-width=".5"/><path d="M15.20 293.10L16.62 292.33L15.70 291.56Z" fill="#1a1a1a"/><path d="M11.6 324.24999999999994L10.74 319.39A4.9399999999999995 4.9399999999999995 0 0 1 15.49 321.21Z" fill="#3058d0"/><path d="M11.6 324.24999999999994L16.46 323.39A4.9399999999999995 4.9399999999999995 0 0 1 14.64 328.14Z" fill="#9030c0"/><path d="M11.6 324.24999999999994L12.46 329.11A4.9399999999999995 4.9399999999999995 0 0 1 7.71 327.29Z" fill="#3058d0"/><path d="M11.6 324.24999999999994L6.74 325.11A4.9399999999999995 4.9399999999999995 0 0 1 8.56 320.36Z" fill="#9030c0"/><circle cx="11.6" cy="324.2" r="1.1" fill="#f0e8ff"/><path d="M15.60 320.85L18.65 319.46L16.32 317.57Z" fill="#c8a070" stroke="#5a4020" stroke-width=".5"/><path d="M18.65 319.46L24.46 312.26L22.13 310.38L16.32 317.57Z" fill="#e4b018" stroke="#7a5a10" stroke-width=".7"/><path d="M17.33 318.39L23.14 311.19" stroke="#b88408" stroke-width=".9"/><path d="M24.46 312.26L25.97 310.39L23.63 308.51L22.13 310.38Z" fill="#de7888" stroke="#a04858" stroke-width=".5"/><path d="M15.60 320.85L17.01 320.06L16.08 319.31Z" fill="#1a1a1a"/><path d="M6.4 341.4H11.6M9 338.8V344.0" stroke="#b01020" stroke-width="1.6"/><rect x="16.6" y="341.2" width="7.6" height="6.4" fill="#e8f0f4" stroke="#333" stroke-width="1.3"/><path d="M16.6 344.4L12.6 345.4L9.4 352.4" fill="none" stroke="#777" stroke-width="1.6"/><path d="M7 349.4L8 355.2L12.4 351.6Z" fill="#666"/><path d="M6.6 375.9L13.6 382.9M17.4 364.9L24.4 371.9" stroke="#222" stroke-width="1.4"/><path d="M11.4 377.9L19.6 369.9" stroke="#c02020" stroke-width="1.2"/><path d="M9.8 379.6L10.6 374.9L14.4 378.8Z" fill="#c02020"/><path d="M21.2 368.3L20.4 372.9L16.6 369.1Z" fill="#c02020"/><rect x="8.4" y="394.5" width="15.8" height="15" fill="#e8eef4" stroke="#1a1a1a" stroke-width="1.5"/><rect x="9.2" y="395.3" width="14.2" height="4.4" fill="#fff"/><path d="M9.2 396.1H23.4M9.2 400.1H23.4M9.2 404.3H23.4M9.2 408.1H23.4M13.6 395.5V408.7M18.8 395.5V408.7" stroke="#a81c30" stroke-width="1.4"/><rect x="8.4" y="421.7" width="15.4" height="13.4" fill="url(#gRect)" stroke="#1a1a1a" stroke-width="1.5"/><rect x="12" y="425.2" width="8.4" height="5.4" fill="#f6f8ff" stroke="#2020a0" stroke-width="1.5"/><path d="M16.6 435.7H25.4M21 431.2V440.1" stroke="#b01c1c" stroke-width="3.6"/><path d="M17.4 435.7H24.6M21 432.1V439.2" stroke="#58a0e8" stroke-width="1.8"/><path d="M8.4 449.8H23.4V458.2L18.6 463.2H8.4Z" fill="url(#gRect)" stroke="#8a1018" stroke-width="1.5" stroke-linejoin="round"/><rect x="13.4" y="483.2" width="11.4" height="9.6" fill="#bcd8f4" stroke="#3a5a9a" stroke-width="1.2"/><path d="M14.2 492.0L17.4 487.8L19.6 489.8L21.6 487.6L24 492.0Z" fill="#38a838"/><path d="M6 480.8L10.4 476.4L14.8 480.8L10.4 485.2Z" fill="#c83040" stroke="#a01020" stroke-width=".6"/><path d="M6.8 480.8H14M10.4 477.2V484.4" stroke="#f0f0f0" stroke-width=".7"/><rect x="8.9" y="479.3" width="3" height="3" fill="#3050c0" stroke="#182880" stroke-width=".6"/><path d="M10.399999999999999 512.6999999999999H22.4M16.4 506.69999999999993V518.6999999999999" stroke="#8a0c1c" stroke-width="3.6"/><path d="M25.599999999999998 512.6999999999999L22.0 516.3L22.0 509.0999999999999Z" fill="#8a0c1c"/><path d="M7.199999999999999 512.6999999999999L10.799999999999999 509.0999999999999L10.799999999999999 516.3Z" fill="#8a0c1c"/><path d="M16.4 521.9L12.799999999999999 518.3L20.0 518.3Z" fill="#8a0c1c"/><path d="M16.4 503.49999999999994L20.0 507.0999999999999L12.799999999999999 507.0999999999999Z" fill="#8a0c1c"/><path d="M9.799999999999999 512.6999999999999H23.0M16.4 506.0999999999999V519.3" stroke="#8c2090" stroke-width="1.9"/><path d="M8.6 545.0L17.8 536.0" stroke="#333" stroke-width="1.2" stroke-dasharray="1.6 1.6"/><path d="M15.2 534.2H23.8M19.5 529.9V538.6" stroke="#b01020" stroke-width="1.1"/><path d="M19.5 531.9L21.4 534.2L19.5 536.6L17.6 534.2Z" fill="#f4d0d0" stroke="#b01020" stroke-width="1"/><path d="M7 546.9H22" stroke="#111" stroke-width="2.2"/><circle cx="23" cy="546.65" r="2.3" fill="url(#gDot)"/><path d="M9.4 571.8L21.4 559.8" stroke="#111" stroke-width="1.5"/><circle cx="21.6" cy="559.6" r="2.2" fill="url(#gDot)"/><circle cx="9" cy="572.2" r="2.2" fill="url(#gDot)"/><rect x="12.4" y="572.2" width="3" height="3.6" fill="#1858e0"/><rect x="15.4" y="572.2" width="3" height="3.6" fill="#9020b0"/><rect x="18.4" y="572.2" width="3.4" height="3.6" fill="#f08020"/><rect x="21.8" y="572.2" width="3.8" height="3.6" fill="#30c040"/><path d="M9 587.4H23.4V596.4L16.2 603.4L9 596.4Z" fill="url(#gRect)" stroke="#1a1a1a" stroke-width="1.5" stroke-linejoin="round"/><path d="M7.4 587.4H25" stroke="#a01020" stroke-width="1.6"/><circle cx="9" cy="587.3500000000001" r="1.9" fill="url(#gDot)"/><circle cx="23.4" cy="587.3500000000001" r="1.9" fill="url(#gDot)"/><circle cx="9.2" cy="596.5500000000002" r="1.9" fill="url(#gDot)"/><circle cx="23.2" cy="596.5500000000002" r="1.9" fill="url(#gDot)"/><circle cx="16.2" cy="603.3500000000001" r="1.9" fill="url(#gDot)"/><path d="M6.6 614.7L13.8 621.9M13.8 614.7L6.6 621.9" stroke="#a01428" stroke-width="1.6"/><path d="M12 619.9L18 625.9" stroke="#888" stroke-width="1.2" stroke-dasharray="1.5 1.2"/><circle cx="18.6" cy="626.7" r="2.2" fill="url(#gDot)"/><path d="M7.4 659.3C7.4 666.7 11 669.7 14.6 667.1S20 664.7 22 668.1S26.4 671.7 28.4 669.3" fill="none" stroke="#111" stroke-width="1.8"/><path d="M11.20 667.10L14.52 665.84L11.48 663.56Z" fill="#c8a070" stroke="#5a4020" stroke-width=".5"/><path d="M14.52 665.84L21.48 656.56L18.44 654.28L11.48 663.56Z" fill="#e4b018" stroke="#7a5a10" stroke-width=".7"/><path d="M12.84 664.58L19.80 655.30" stroke="#b88408" stroke-width=".9"/><path d="M21.48 656.56L22.92 654.64L19.88 652.36L18.44 654.28Z" fill="#de7888" stroke="#a04858" stroke-width=".5"/><path d="M11.20 667.10L12.58 666.26L11.62 665.54Z" fill="#1a1a1a"/><rect x="8.4" y="683.5" width="16.4" height="15.2" fill="url(#gRect)" stroke="#c0623a" stroke-width="1.4"/><path d="M8 727.5H25" stroke="#b88060" stroke-width="1.6"/><path d="M9.4 726.5L12.4 716.9L15.6 726.5" fill="none" stroke="#222" stroke-width="1.4"/><path d="M10.4 710.1V716.5L14.6 713.3Z" fill="#f0f0f0" stroke="#222" stroke-width="1.3" stroke-linejoin="round"/><path d="M21.6 716.1V726.5" stroke="#333" stroke-width="2"/><circle cx="21.6" cy="713.1" r="2.7" fill="#fff" stroke="#2a7ae0" stroke-width="1.5"/><rect x="8.4" y="738.9" width="15.6" height="15.4" fill="#f4f8ff" stroke="#a81820" stroke-width="1.5"/><path d="M8.4 740.5H24" stroke="#2848a0" stroke-width="2"/><path d="M10.4 743.9H22M10.4 746.7H22M10.4 749.5H22M10.4 751.9H22" stroke="#88a8e0" stroke-width="1"/><path d="M16.40 748.90L19.56 747.39L16.55 745.40Z" fill="#c8a070" stroke="#5a4020" stroke-width=".5"/><path d="M19.56 747.39L25.18 738.89L22.17 736.91L16.55 745.40Z" fill="#e4b018" stroke="#7a5a10" stroke-width=".7"/><path d="M17.89 746.29L23.51 737.79" stroke="#b88408" stroke-width=".9"/><path d="M25.18 738.89L26.50 736.89L23.50 734.91L22.17 736.91Z" fill="#de7888" stroke="#a04858" stroke-width=".5"/><path d="M16.40 748.90L17.73 747.98L16.73 747.32Z" fill="#1a1a1a"/><path d="M8 769.7C12 766.3 21 766.3 25 769.7V778.1C21 774.9 12 774.9 8 778.1Z" fill="#e8f0ff" stroke="#a81820" stroke-width="1.7" stroke-linejoin="round"/><path d="M9 773.7C12.6 770.5 20.4 770.5 24 773.7" fill="none" stroke="#6a8ae0" stroke-width="1.3"/><path d="M16.4 764.3V782.3" stroke="#111" stroke-width="1.4"/><path d="M7.6 808.1C10 805.1 13 805.1 16 807.3S22 808.7 25.4 805.7" fill="none" stroke="#3858b8" stroke-width="2.2"/><path d="M7.6 808.1C10 805.1 13 805.1 16 807.3S22 808.7 25.4 805.7" fill="none" stroke="#c02828" stroke-width="1" stroke-dasharray="2.4 1.6"/><path d="M12.60 803.70L15.87 802.31L12.75 800.15Z" fill="#c8a070" stroke="#5a4020" stroke-width=".5"/><path d="M15.87 802.31L21.80 793.75L18.67 791.59L12.75 800.15Z" fill="#e4b018" stroke="#7a5a10" stroke-width=".7"/><path d="M14.14 801.12L20.07 792.56" stroke="#b88408" stroke-width=".9"/><path d="M21.80 793.75L23.16 791.78L20.04 789.62L18.67 791.59Z" fill="#de7888" stroke="#a04858" stroke-width=".5"/><path d="M12.60 803.70L13.95 802.81L12.96 802.13Z" fill="#1a1a1a"/><path d="M11.6 825.4L14 821.4H24.4" fill="none" stroke="#111" stroke-width="1.8"/></svg>
<span class="t" style="left:13.2px;top:682.9px;font-family:'Liberation Serif',serif;font-weight:700;font-size:17px;line-height:17px;color:#a8400c">I</span>
<svg style="left:0;top:0" width="975" height="827" viewBox="0 0 975 827"><g fill="none" stroke="#4646c8" stroke-width="1.15"><path d="M77.5 549.5L392.8 318.2L408.2 236.2"/><path d="M330.7 433.5L421 502.2"/><path d="M763.5 298.5L762.4 487.7L540 535.5"/><path d="M402.7 236.3H413.7M408.2 230.8V241.8"/><path d="M387.3 318.2H398.3M392.8 312.7V323.7"/><path d="M325.2 433.5H336.2M330.7 428.0V439.0"/><path d="M71.8 549.5H82.8M77.3 544.0V555.0"/><path d="M758.0 298.5H769.0M763.5 293.0V304.0"/><path d="M756.8 487.7H767.8M762.3 482.2V493.2"/><path d="M277.9 398.5H288.9M283.4 393.0V404.0"/></g></svg>
<div class="a" style="left:457px;top:156px;width:304px;height:121px;background:#f0f0f0;box-shadow:0 2px 9px 1px rgba(0,0,0,.33)"></div>
<div class="a" style="left:457px;top:156px;width:304px;height:38px;background:#fff"></div>
<svg style="left:469px;top:162px" width="19" height="23" viewBox="469 162 19 23"><path d="M470.8 168.6L478.2 164.2L485.7 169.8L478 173.2Z" fill="#4f8f74"/><path d="M474 166.8L478.2 164.4L482 167.2L478 169.2Z" fill="#6aa48a" opacity=".7"/><path d="M478 173.2L485.7 169.8V179.8L478.2 183.8Z" fill="#1f5a40"/><path d="M485.7 171V179.8L482 181.8Z" fill="#16402e"/><path d="M470.8 168.6L478 173.2L478.2 183.8L470.8 179.4Z" fill="#fff"/><path d="M480.2 179.6L481.6 175.8L482.6 177.4L483.6 173.4" fill="none" stroke="#f4f8f4" stroke-width="1.5"/><text x="470.9" y="178.6" font-family="Liberation Sans, sans-serif" font-size="10.5" font-weight="700" fill="#d01840" transform="rotate(16 471 175)" textLength="5.6" lengthAdjust="spacingAndGlyphs">12</text></svg>
<span class="t c" style="left:493.6px;top:167.1px;font-size:15.5px;line-height:15.5px;color:#9c9c9c;transform:scaleX(0.9544);">String Inquire</span>
<div class="a" style="left:608px;top:174px;width:12px;height:1px;background:#5a5a5a"></div>
<div class="a" style="left:666px;top:169px;width:12px;height:12px;border:1px solid #dcdcdc"></div>
<svg style="left:725px;top:169px" width="12" height="12" viewBox="0 0 12 12"><path d="M0 0L12 12M12 0L0 12" stroke="#4a4a4a" stroke-width="1.1" fill="none"/></svg>
<div class="a" style="left:464px;top:201px;width:291px;height:22px;background:#f0f0f0;border:2px solid;border-color:#808080 #f8f8f8 #f8f8f8 #808080;box-shadow:1px 1px 0 #fff"></div>
<div class="lb" style="left:498px;top:230px;width:48px;height:27px"></div>
<span class="t" style="left:508.4px;top:234.7px;font-size:15.5px;line-height:15.5px;color:#101010;transform:scaleX(0.9387);">Pick</span>
<div class="lb" style="left:583px;top:230px;width:48px;height:27px"></div>
<span class="t" style="left:587.0px;top:234.7px;font-size:15.5px;line-height:15.5px;color:#101010;transform:scaleX(0.9309);">Finish</span>
<div class="lb" style="left:668px;top:230px;width:48px;height:27px"></div>
<span class="t" style="left:676.6px;top:234.7px;font-size:15.5px;line-height:15.5px;color:#101010;transform:scaleX(0.9533);">Help</span>
<svg style="left:746px;top:262px" width="15" height="15" viewBox="0 0 15 15"><path d="M2 15L15 2M6 15L15 6M10 15L15 10" stroke="#b8b8b8" stroke-width="1.2" fill="none"/><path d="M3 15L15 3M7 15L15 7M11 15L15 11" stroke="#fff" stroke-width="1" fill="none"/></svg>
<div class="a" style="left:416px;top:405px;width:144px;height:417px;background:#f0f0f0;box-shadow:0 2px 9px 1px rgba(0,0,0,.33)"></div>
<div class="a" style="left:416px;top:405px;width:144px;height:38px;background:#fff"></div>
<span class="t c" style="left:426.3px;top:415.8px;font-size:15.5px;line-height:15.5px;color:#9a9a9a;transform:scaleX(0.9968);">Information</span>
<div class="a" style="left:534px;top:414px;width:25px;height:25px;background:#e1e1e1"></div>
<svg style="left:543px;top:423px" width="7" height="7" viewBox="0 0 7 7"><path d="M0 0L7 7M7 0L0 7" stroke="#ececec" stroke-width="1.1" fill="none"/></svg>
<span class="t" style="left:419.4px;top:445.7px;font-size:15.5px;line-height:15.5px;color:#101010;transform:scaleX(0.8866);">General</span>
<span class="t" style="left:426.3px;top:467.0px;font-size:15.5px;line-height:15.5px;color:#101010;transform:scaleX(0.9643);">Model = CAD</span>
<span class="t" style="left:426.3px;top:488.2px;font-size:15.5px;line-height:15.5px;color:#101010;transform:scaleX(0.9296);">Name = LINE</span>
<span class="t" style="left:426.3px;top:509.5px;font-size:15.5px;line-height:15.5px;color:#101010;transform:scaleX(0.9251);">Type = Super</span>
<span class="t" style="left:426.3px;top:530.8px;font-size:15.5px;line-height:15.5px;color:#101010;transform:scaleX(0.9440);">Type like = 3d</span>
<span class="t" style="left:426.3px;top:552.0px;font-size:15.5px;line-height:15.5px;color:#101010;transform:scaleX(0.9749);">Colour = dark blue</span>
<span class="t" style="left:426.3px;top:573.3px;font-size:15.5px;line-height:15.5px;color:#101010;transform:scaleX(0.9272);">Line style = 1</span>
<span class="t" style="left:426.3px;top:594.5px;font-size:15.5px;line-height:15.5px;color:#101010;transform:scaleX(1.0142);">Pt/line = point</span>
<span class="t" style="left:426.3px;top:615.8px;font-size:15.5px;line-height:15.5px;color:#101010;transform:scaleX(0.9350);"># pts = 1</span>
<span class="t" style="left:426.3px;top:637.1px;font-size:15.5px;line-height:15.5px;color:#101010;transform:scaleX(0.9644);"># attributes = 3</span>
<span class="t" style="left:426.3px;top:658.3px;font-size:15.5px;line-height:15.5px;color:#101010;transform:scaleX(0.9348);">Length = 0.000</span>
<span class="t" style="left:426.3px;top:679.6px;font-size:15.5px;line-height:15.5px;color:#101010;transform:scaleX(0.9197);">Locks = Read (-1)</span>
<span class="t" style="left:426.3px;top:700.8px;font-size:15.5px;line-height:15.5px;color:#101010;transform:scaleX(0.9502);">Point snap =</span>
<span class="t" style="left:426.3px;top:722.1px;font-size:15.5px;line-height:15.5px;color:#101010;transform:scaleX(0.8835);">X = 200078.056</span>
<span class="t" style="left:426.3px;top:743.4px;font-size:15.5px;line-height:15.5px;color:#101010;transform:scaleX(0.8775);">Y = 619261.491</span>
<span class="t" style="left:426.3px;top:764.6px;font-size:15.5px;line-height:15.5px;color:#101010;transform:scaleX(0.9350);">Prof ch = 0.000</span>
<span class="t" style="left:426.3px;top:785.9px;font-size:15.5px;line-height:15.5px;color:#101010;transform:scaleX(0.9277);">Bearing = 90°</span>
<span class="t" style="left:426.3px;top:807.1px;font-size:15.5px;line-height:15.5px;color:#101010;transform:scaleX(0.9541);">+ve =</span>
<div class="a" style="left:415px;top:462px;width:148px;height:133px;border:4px solid #5058a8"></div>
<div class="a" style="left:417px;top:696px;width:144px;height:70px;border:4px solid #5058a8"></div>
<svg style="left:0;top:0" width="975" height="827" viewBox="0 0 975 827"><path d="M73.0 266.0L322.0 266.0L322.0 350.0L280.6 350.0L282.0 393.5L197.3 350.0L73.0 350.0Z" fill="#fff" stroke="#5058a8" stroke-width="2" stroke-linejoin="miter"/></svg>
<span class="t c" style="left:148.5px;top:271.5px;font-size:15.5px;line-height:15.5px;color:#000;transform:scaleX(0.9927);">Newly created</span>
<span class="t c" style="left:93.6px;top:289.3px;font-size:15.5px;line-height:15.5px;color:#000;">2 Segments Intersection Point</span>
<span class="t c" style="left:111.7px;top:307.4px;font-size:15.5px;line-height:15.5px;color:#000;transform:scaleX(0.9866);">with the settings from the</span>
<span class="t c" style="left:139.0px;top:325.2px;font-size:15.5px;line-height:15.5px;color:#000;transform:scaleX(1.0135);">CAD Control Bar</span>
<svg style="left:0;top:0" width="975" height="827" viewBox="0 0 975 827"><path d="M460.5 301.5L487.5 301.5L519.3 260.5L539.6 301.5L619.5 301.5L619.5 348.5L460.5 348.5Z" fill="#fff" stroke="#5058a8" stroke-width="2" stroke-linejoin="miter"/></svg>
<span class="t c" style="left:466.8px;top:306.2px;font-size:15.5px;line-height:15.5px;color:#000;transform:scaleX(0.9827);">Open a String Inquire</span>
<span class="t c" style="left:497.6px;top:324.5px;font-size:15.5px;line-height:15.5px;color:#000;font-weight:700;transform:scaleX(1.0220);">&lt;F2&gt;</span>
<span class="t c" style="left:534.6px;top:324.5px;font-size:15.5px;line-height:15.5px;color:#000;transform:scaleX(0.9588);"> Button</span>
<svg style="left:0;top:0" width="975" height="827" viewBox="0 0 975 827"><path d="M613.0 538.0L835.0 538.0L835.0 605.0L613.0 605.0L613.0 570.7L566.0 555.8L613.0 549.0Z" fill="#fff" stroke="#5058a8" stroke-width="2" stroke-linejoin="miter"/></svg>
<span class="t c" style="left:626.4px;top:543.6px;font-size:15.5px;line-height:15.5px;color:#000;transform:scaleX(0.9883);">Information Panel shows the</span>
<span class="t c" style="left:625.0px;top:561.5px;font-size:15.5px;line-height:15.5px;color:#000;">new points Model and String</span>
<span class="t c" style="left:629.4px;top:579.3px;font-size:15.5px;line-height:15.5px;color:#000;transform:scaleX(0.9957);">name, Colour and Linestyle</span>
<svg style="left:0;top:0" width="975" height="827" viewBox="0 0 975 827"><path d="M611.6 703.4L768.5 703.4L768.5 752.5L611.6 752.5L611.6 727.3L565.0 720.2L611.6 711.7Z" fill="#fff" stroke="#5058a8" stroke-width="2" stroke-linejoin="miter"/></svg>
<span class="t c" style="left:654.5px;top:708.3px;font-size:15.5px;line-height:15.5px;color:#000;transform:scaleX(0.9964);">New Point</span>
<span class="t c" style="left:625.3px;top:726.4px;font-size:15.5px;line-height:15.5px;color:#000;transform:scaleX(1.0106);">X &amp; Y Coordinates</span>
<svg style="left:0;top:0" width="975" height="827" viewBox="0 0 975 827"><path d="M283.3 389.3L292.8 398.4L283.3 407.3L273.8 398.4Z" fill="none" stroke="#eaea28" stroke-width="1.6" stroke-dasharray="5.4 3" stroke-dashoffset="2.7"/><path d="M280.5 404.3V420.3L284.3 416.8L287.2 422.9L289.4 421.9L286.6 415.9H291.6Z" fill="#fff" stroke="#000" stroke-width="1" stroke-linejoin="miter"/></svg>
</div>
</body></html>
